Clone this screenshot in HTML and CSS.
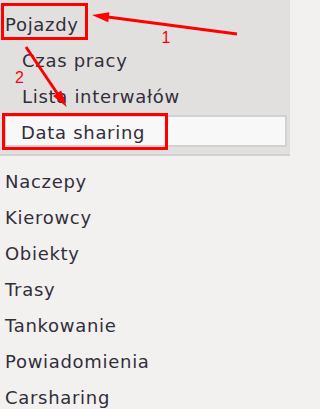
FILE: index.html
```html
<!DOCTYPE html>
<html lang="pl">
<head>
<meta charset="utf-8">
<title>Menu</title>
<link rel="stylesheet" href="styles.css">
</head>
<body>
<div class="page">
  <nav class="top">
    <div class="item root">Pojazdy</div>
    <div class="item sub">Czas pracy</div>
    <div class="item sub">Lista interwałów</div>
    <div class="item sub active">Data sharing</div>
  </nav>
  <nav class="list">
    <div class="item">Naczepy</div>
    <div class="item">Kierowcy</div>
    <div class="item">Obiekty</div>
    <div class="item">Trasy</div>
    <div class="item">Tankowanie</div>
    <div class="item">Powiadomienia</div>
    <div class="item">Carsharing</div>
  </nav>
  <svg class="annot" width="290" height="409" viewBox="0 0 290 409">
    <rect class="mark" x="2.5" y="4.5" width="84" height="34"/>
    <rect class="mark" x="3.5" y="114.5" width="163" height="34"/>
    <line class="arrow" x1="237" y1="34" x2="106" y2="16.8"/>
    <polygon class="head" points="92,15 108.2,22.2 109.5,12.2"/>
    <line class="arrow" x1="26" y1="47" x2="59" y2="96"/>
    <polygon class="head" points="66.7,107 61.2,90.5 53,96.1"/>
    <text class="num" x="161.5" y="43">1</text>
    <text class="num" x="15" y="83">2</text>
  </svg>
</div>
</body>
</html>
```
FILE: styles.css
```css
html, body {
  margin: 0;
  padding: 0;
}
body {
  font-family: "DejaVu Sans", Verdana, sans-serif;
  font-size: 18px;
  letter-spacing: 0.7px;
  color: #332e3b;
  background: #f2f1f0;
}
.page {
  position: relative;
  width: 290px;
  height: 409px;
  overflow: hidden;
}
.top {
  background: #e2e0de;
  padding: 7px 0 7px 0;
  border-bottom: 2px solid #d2d0ce;
}
.list {
  padding-top: 8px;
}
.item {
  line-height: 36px;
  height: 36px;
  padding-left: 5px;
  white-space: nowrap;
}
.sub {
  padding-left: 22px;
}
.active {
  margin: 0 3px 0 4px;
  background: #f9f8f8;
  border: 2px solid #d3d1d0;
  height: 24px;
  line-height: 24px;
  padding-top: 4px;
  padding-left: 15px;
}
.annot {
  position: absolute;
  left: 0;
  top: 0;
  pointer-events: none;
}
.mark {
  fill: none;
  stroke: #ff0000;
  stroke-width: 3;
}
.arrow {
  stroke: #ff0000;
  stroke-width: 3;
}
.head {
  fill: #ff0000;
}
.num {
  fill: #ff0000;
  font-family: "Liberation Sans", Arial, sans-serif;
  font-size: 16px;
  letter-spacing: 0;
}
```
